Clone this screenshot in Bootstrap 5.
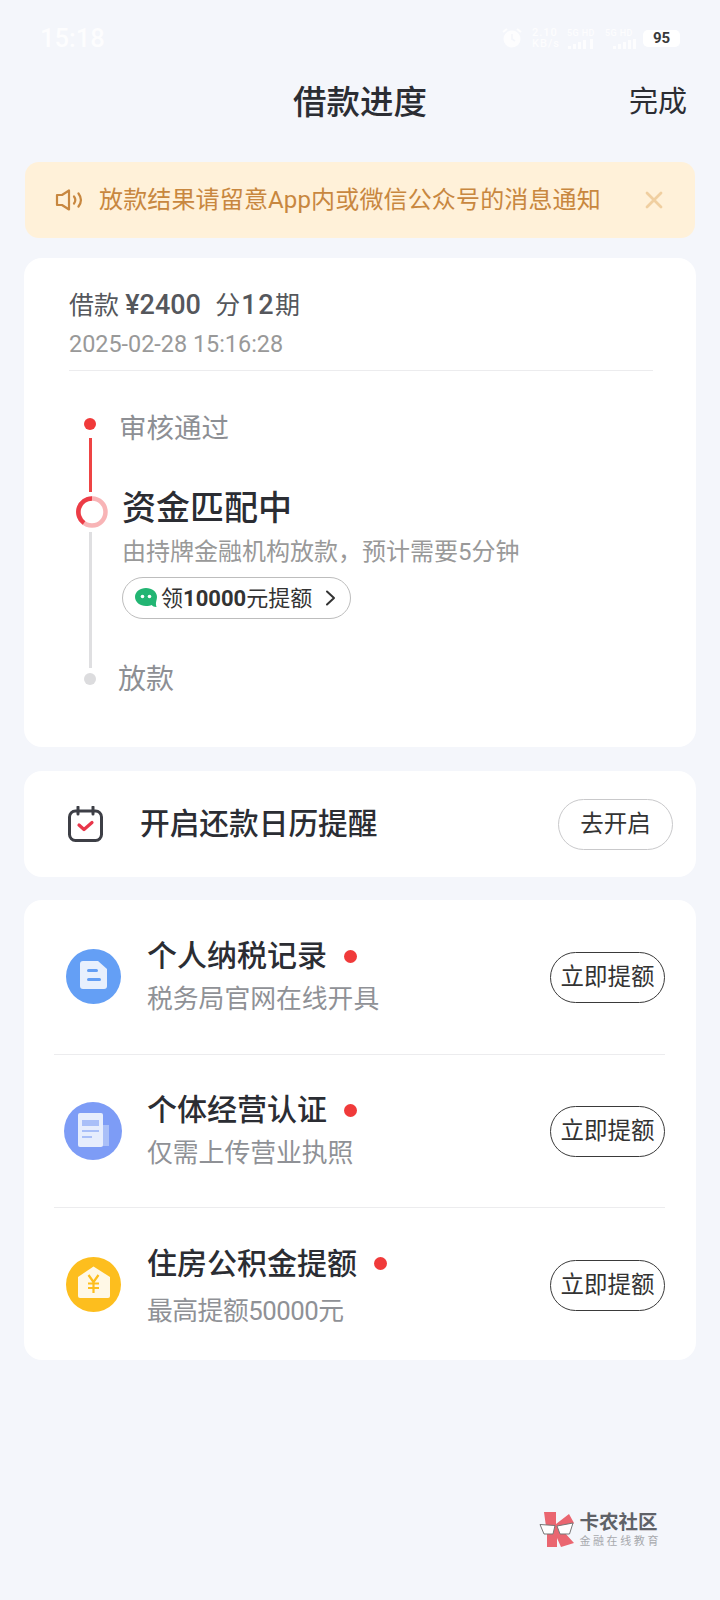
<!DOCTYPE html>
<html lang="zh-CN">
<head>
  <meta charset="UTF-8" />
  <meta name="viewport" content="width=device-width, initial-scale=1.0" />
  <title>借款进度</title>
  <link href="https://cdn.jsdelivr.net/npm/bootstrap@5.3.0/dist/css/bootstrap.min.css" rel="stylesheet" />
  <style>
    body {
      font-family: Roboto, "Noto Sans CJK SC", sans-serif;
      background: #f4f6fb;
      color: #2b2d33;
      min-height: 1600px;
    }
    /* 状态栏 */
    .status-row { height: 76px; padding: 0 40px 0 40px; color: #fdfdfe; }
    .status-time { font-size: 25.5px; font-weight: 500; line-height: 76px; }
    .status-two { font-size: 11px; line-height: 11px; font-weight: 500; letter-spacing: 1px; width: 30px; margin-left: 10px; }
    .status-net { width: 33px; margin-left: 5px; font-size: 9px; line-height: 11px; font-weight: 500; white-space: nowrap; letter-spacing: .4px; }
    .status-net svg { display: block; }
    .status-batt {
      width: 37px; height: 17px; margin-left: 5px; background: #fff; color: #3a3a3a; border-radius: 5px;
      font-size: 15px; font-weight: 700; line-height: 17px; text-align: center;
    }
    /* 标题 */
    .top-head {
      display: grid; grid-template-columns: 1fr auto 1fr; align-items: center;
      height: 54px; padding: 0 33px;
    }
    .top-title { font-size: 33.5px; font-weight: 500; line-height: 54px; }
    .top-done { font-size: 29px; justify-self: end; }
    /* 提示条 */
    .notice-bar {
      margin: 32px 25px 20px; height: 76px; padding: 0 32px 0 30px;
      background: #fff1d9; border-radius: 14px; color: #c8873f; font-size: 24px; letter-spacing: .15px;
    }
    /* 卡片 */
    .white-box { margin: 0 24px 23px; background: #fff; border-radius: 18px; }
    .loan-box { height: 489px; padding: 27px 43px 0 45px; margin-bottom: 24px; }
    .loan-head { font-size: 25px; line-height: 40px; color: #55575c; }
    .loan-head b { font-weight: 500; font-size: 27px; }
    .loan-head .loan-term { margin-left: 2px; }
    .loan-head .loan-term b { letter-spacing: 1.5px; margin-left: 1px; }
    .loan-date { font-size: 23.4px; line-height: 36px; color: #999; }
    .loan-line { height: 1px; background: #ececee; margin-top: 8px; }
    /* 进度 */
    .prog-axis { width: 32px; margin: 47px 0 0 5px; }
    .prog-dot { width: 12px; height: 12px; border-radius: 50%; background: #f03a3a; }
    .prog-dot.gray { background: #dcdcde; }
    .prog-bar { width: 3px; background: #ee4444; height: 54px; margin: 8px 0 4px; }
    .prog-bar.gray { background: #dfdfe1; height: 136px; margin: 4px 0 5px; }
    .prog-ring { display: block; margin-left: 4px; }
    .prog-text { margin-left: 16px; padding-top: 38px; }
    .prog-done { font-size: 27.5px; line-height: 40px; color: #8d8f94; margin-left: -3px; }
    .prog-now { font-size: 34px; font-weight: 500; line-height: 48px; margin-top: 35px; }
    .prog-sub { font-size: 24px; line-height: 36px; color: #999; margin-top: 2px; }
    .prog-pill {
      width: 229px; height: 42px; margin-top: 7px; padding: 0 14px 0 12px;
      border: 1px solid #bdbdbd; border-radius: 21px; font-size: 22px; color: #333;
    }
    .prog-pill b { font-weight: 700; }
    .prog-last { font-size: 28px; line-height: 40px; color: #8d8f94; margin: 41px 0 0 -4px; }
    /* 日历提醒 */
    .remind-box { height: 106px; padding: 0 23px 0 44px; }
    .remind-txt { font-size: 29.7px; font-weight: 500; margin-left: 37px; }
    .round-btn {
      height: 51px; padding: 0; background: #fff; border-radius: 26px;
      font-size: 23.5px; color: #333; line-height: 49px; text-align: center;
    }
    .round-btn.soft { width: 115px; border: 1px solid #c9c9cb; }
    .round-btn.dark { width: 115px; border: 1.5px solid #3a3a3a; margin-top: 2px; }
    /* 提额列表 */
    .raise-box { height: 460px; padding: 0 31px 0 30px; }
    .raise-row { height: 153.5px; }
    .raise-row + .raise-row { border-top: 1px solid #ececee; }
    .raise-icon { width: 60px; margin: 0 24px 0 9px; }
    .raise-title { font-size: 30px; font-weight: 500; line-height: 42px; }
    .raise-sub { font-size: 25.8px; line-height: 38px; color: #8f9196; margin-top: 3px; }
    .raise-low { margin-top: 4px; }
    .raise-sub.lower { margin-top: 7px; letter-spacing: -.5px; }
    .red-spot { width: 13px; height: 13px; background: #f03a3a; border-radius: 50%; margin-left: 17px; }
    /* 水印 */
    .mark-wrap { margin: 152px 59px 0 0; }
    .mark-big { font-size: 19.5px; font-weight: 700; line-height: 20px; color: #5f6268; }
    .mark-small { font-size: 11px; line-height: 13px; color: #a7a9ad; letter-spacing: 2.6px; margin-top: 2px; }
  </style>
</head>
<body>

  <!-- 状态栏 -->
  <div class="status-row d-flex align-items-center">
    <span class="status-time">15:18</span>
    <div class="d-flex align-items-center ms-auto">
      <svg width="20" height="20" viewBox="0 0 20 20"><circle cx="10" cy="11" r="8.500" fill="#fdfdfe"/><path d="M1 4l4-3M19 4l-4-3" stroke="#fdfdfe" stroke-width="2"/><path d="M10 6v5l3 2" stroke="#f4f6fb" stroke-width="1.600" fill="none"/></svg>
      <div class="status-two">2.10<br>KB/s</div>
      <div class="status-net">5G HD
        <svg width="32" height="10" viewBox="0 0 32 10" fill="#fdfdfe"><path d="M1 7h3v3H1zM6 5h3v5H6zM11 3h3v7h-3zM16 1h3v9h-3zM23 0h3v10h-3z"/></svg>
      </div>
      <div class="status-net">5G HD
        <svg width="32" height="10" viewBox="0 0 32 10" fill="#fdfdfe"><path d="M8 7h3v3H8zM13 5h3v5h-3zM18 3h3v7h-3zM23 1h3v9h-3zM28 0h3v10h-3z"/></svg>
      </div>
      <div class="status-batt">95</div>
    </div>
  </div>

  <!-- 标题 -->
  <div class="top-head">
    <span></span>
    <span class="top-title">借款进度</span>
    <span class="top-done">完成</span>
  </div>

  <!-- 提示条 -->
  <div class="notice-bar d-flex align-items-center">
    <svg width="28" height="22" viewBox="0 0 28 22" fill="none" stroke="#c8873f" stroke-width="2.200" stroke-linejoin="round" stroke-linecap="round">
      <path d="M2 6h5l7-4.500v19L7 16H2z"/>
      <path d="M19 7.500c1.500 2 1.500 5 0 7"/>
      <path d="M23.500 4.500c3 4 3 9 0 13"/>
    </svg>
    <span class="ms-3">放款结果请留意App内或微信公众号的消息通知</span>
    <svg class="ms-auto" width="18" height="18" viewBox="0 0 18 18" stroke="#f0cfa0" stroke-width="2.800" stroke-linecap="round"><path d="M2 2l14 14M16 2L2 16"/></svg>
  </div>

  <!-- 借款信息 -->
  <div class="white-box loan-box">
    <div class="loan-head">借款 <b>¥2400</b>&nbsp;&nbsp;<span class="loan-term">分<b>12</b>期</span></div>
    <div class="loan-date">2025-02-28 15:16:28</div>
    <div class="loan-line"></div>
    <div class="d-flex">
      <div class="prog-axis d-flex flex-column align-items-center">
        <div class="prog-dot"></div>
        <div class="prog-bar"></div>
        <svg class="prog-ring" width="32" height="32" viewBox="0 0 32 32" fill="none" stroke-width="4.500">
          <circle cx="16" cy="16" r="13.500" stroke="#f8b4b6"/>
          <path d="M16 2.500A13.500 13.500 0 0 0 8 27" stroke="#ec3c46"/>
        </svg>
        <div class="prog-bar gray"></div>
        <div class="prog-dot gray"></div>
      </div>
      <div class="prog-text">
        <div class="prog-done">审核通过</div>
        <div class="prog-now">资金匹配中</div>
        <div class="prog-sub">由持牌金融机构放款，预计需要5分钟</div>
        <div class="prog-pill d-flex align-items-center">
          <svg width="22" height="20" viewBox="0 0 22 20"><path d="M11 0c6 0 11 3.800 11 9 0 3-1.500 5-1 8 .2 1.200.6 2 .6 2-1.800.2-4-.8-5-2-1.600.6-3 1-5.600 1C5 18 0 14 0 9 0 3.800 5 0 11 0z" fill="#22b573"/><circle cx="7.500" cy="8.500" r="1.800" fill="#fff"/><circle cx="14.500" cy="8.500" r="1.800" fill="#fff"/></svg>
          <span class="ms-1"><span>领</span><b>10000</b><span>元提额</span></span>
          <svg class="ms-auto" width="11" height="16" viewBox="0 0 11 16" fill="none" stroke="#333" stroke-width="2" stroke-linecap="round" stroke-linejoin="round"><path d="M2 1.500L9 8l-7 6.500"/></svg>
        </div>
        <div class="prog-last">放款</div>
      </div>
    </div>
  </div>

  <!-- 日历提醒 -->
  <div class="white-box remind-box d-flex align-items-center">
    <svg width="35" height="36" viewBox="0 0 35 36" fill="none">
      <rect x="1.500" y="5" width="32" height="29.500" rx="6" stroke="#3d3f46" stroke-width="3"/>
      <path d="M10 1v7M25 1v7" stroke="#3d3f46" stroke-width="3" stroke-linecap="round"/>
      <path d="M11 19l5 4.500 8-7" stroke="#e8364a" stroke-width="3.200" stroke-linecap="round" stroke-linejoin="round"/>
    </svg>
    <span class="remind-txt">开启还款日历提醒</span>
    <button type="button" class="round-btn soft ms-auto">去开启</button>
  </div>

  <!-- 提额列表 -->
  <div class="white-box raise-box">
    <div class="raise-row d-flex align-items-center">
      <div class="raise-icon d-flex justify-content-center">
        <svg width="55" height="55" viewBox="0 0 55 55">
          <circle cx="27.500" cy="27.500" r="27.500" fill="#649ff5"/>
          <path d="M17 12h15l9 8v17a3 3 0 0 1-3 3H17a3 3 0 0 1-3-3V15a3 3 0 0 1 3-3z" fill="#e8f0fd"/>
          <path d="M22.500 21.500h8M22.500 30.500h11" stroke="#649ff5" stroke-width="3" stroke-linecap="round"/>
        </svg>
      </div>
      <div>
        <div class="d-flex align-items-center">
          <span class="raise-title">个人纳税记录</span><span class="red-spot"></span>
        </div>
        <div class="raise-sub">税务局官网在线开具</div>
      </div>
      <button type="button" class="round-btn dark ms-auto">立即提额</button>
    </div>
    <div class="raise-row d-flex align-items-center">
      <div class="raise-icon d-flex justify-content-center">
        <svg width="58" height="58" viewBox="0 0 58 58">
          <circle cx="29" cy="29" r="29" fill="#7d9cf6"/>
          <rect x="38" y="23" width="7" height="21" fill="#a9bff8"/>
          <rect x="14" y="11" width="25" height="34" rx="2" fill="#e6edfd"/>
          <rect x="18" y="18" width="17" height="6" fill="#a9bff8"/>
          <path d="M18 29h17M18 35h10" stroke="#a9bff8" stroke-width="2"/>
        </svg>
      </div>
      <div>
        <div class="d-flex align-items-center">
          <span class="raise-title">个体经营认证</span><span class="red-spot"></span>
        </div>
        <div class="raise-sub">仅需上传营业执照</div>
      </div>
      <button type="button" class="round-btn dark ms-auto">立即提额</button>
    </div>
    <div class="raise-row d-flex align-items-center">
      <div class="raise-icon d-flex justify-content-center">
        <svg width="55" height="55" viewBox="0 0 55 55">
          <circle cx="27.500" cy="27.500" r="27.500" fill="#fdbe1e"/>
          <path d="M27.500 9.500L44 20v19a2 2 0 0 1-2 2H14a2 2 0 0 1-2-2V20z" fill="#fff8e6"/>
          <path d="M22.500 18l5 7 5-7M27.500 25v11M22 26.500h11M22 31h11" stroke="#fdbe1e" stroke-width="2.200" fill="none"/>
        </svg>
      </div>
      <div class="raise-low">
        <div class="d-flex align-items-center">
          <span class="raise-title">住房公积金提额</span><span class="red-spot"></span>
        </div>
        <div class="raise-sub lower">最高提额50000元</div>
      </div>
      <button type="button" class="round-btn dark ms-auto">立即提额</button>
    </div>
  </div>

  <!-- 水印 -->
  <div class="mark-wrap d-flex justify-content-end align-items-center">
    <svg width="36" height="36" viewBox="0 0 36 36">
      <path d="M5 0h12v12L30 2l5 9-10 9 10 11-13 4-4-9v9H8V22z" fill="#ea6670"/>
      <path d="M1 12.500l15 1-2 8.500H5z" fill="#fff" stroke="#777" stroke-width="1" stroke-linejoin="round"/>
      <path d="M18 14l16-3-3.500 11H21z" fill="#fff" stroke="#777" stroke-width="1" stroke-linejoin="round"/>
    </svg>
    <div class="ms-1">
      <div class="mark-big">卡农社区</div>
      <div class="mark-small">金融在线教育</div>
    </div>
  </div>

  <script src="https://cdn.jsdelivr.net/npm/bootstrap@5.3.0/dist/js/bootstrap.bundle.min.js"></script>
</body>
</html>
